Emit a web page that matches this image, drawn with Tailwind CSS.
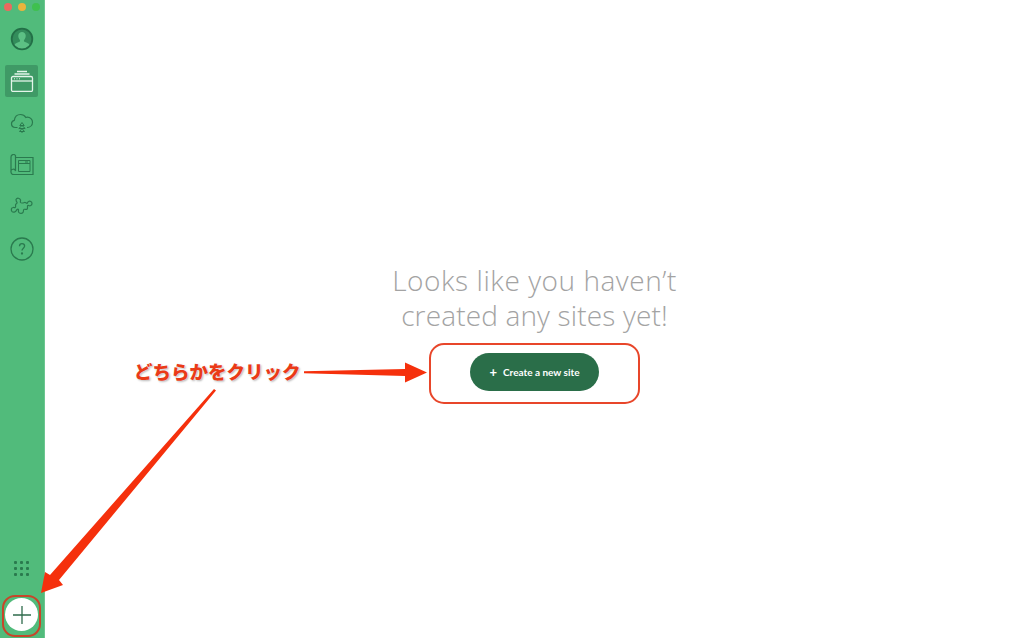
<!DOCTYPE html>
<html lang="ja">
<head>
<meta charset="utf-8">
<script src="https://cdn.jsdelivr.net/npm/@tailwindcss/browser@4"></script>
</head>
<body class="m-0 overflow-hidden bg-white">
<div class="relative flex h-[638px] w-[1024px] font-['Lato','Liberation_Sans',sans-serif]">
  <aside class="flex h-full w-[45px] shrink-0 flex-col items-center bg-[#51bb7b] border-r border-[#6cc690]">
    <div class="flex w-full gap-[6px] pl-[4px] pt-[3px]">
      <span class="h-[8px] w-[8px] rounded-full bg-[#ec6a5e]"></span>
      <span class="h-[8px] w-[8px] rounded-full bg-[#e9b43c]"></span>
      <span class="h-[8px] w-[8px] rounded-full bg-[#3fc04f]"></span>
    </div>
    <nav class="mt-[12px] mr-[1px] flex flex-col items-center gap-[10px]">
      <a class="flex h-[32px] w-[33px] items-center justify-center">
        <svg width="24" height="24" viewBox="0 0 24 24"><circle cx="12" cy="12" r="10.200" fill="#338c5b"/><path d="M3.800 18.500c1.200-2.500 4.300-2.900 5.800-3.800.7-.5.600-1.300.1-2-1-1.200-1.500-2.700-1.400-4.100.2-2.200 1.700-3.500 3.700-3.500s3.500 1.300 3.700 3.500c.1 1.400-.4 2.900-1.400 4.100-.5.700-.6 1.500.1 2 1.500.9 4.600 1.300 5.800 3.800-2 2.500-5 3.900-8.200 3.900s-6.200-1.400-8.200-3.900z" fill="#5cc084"/><circle cx="12" cy="12" r="10.300" fill="none" stroke="#236f47" stroke-width="1.800"/></svg>
      </a>
      <a class="flex h-[32px] w-[33px] items-center justify-center rounded-[2px] bg-[#3f9a66]">
        <svg width="24" height="22" viewBox="0 0 24 22" fill="none" stroke="#e4f5ea" stroke-width="1.300"><path d="M7 1.500h10M4.500 4h15"/><rect x="1.500" y="6.500" width="21" height="15" rx="1.500"/><path d="M1.500 11h21"/><path d="M4 8.800h1M6.500 8.800h1M9 8.800h1" stroke-width="1"/></svg>
      </a>
      <a class="flex h-[32px] w-[33px] items-center justify-center">
        <svg width="24" height="22" viewBox="0 0 24 22" fill="none" stroke="#2a7a4e" stroke-width="1.200"><path d="M7.500 15.500H5.500C3 15.500 1.500 13.800 1.500 11.800c0-1.800 1.200-3.100 2.800-3.500C4.800 5 7.300 2.500 10.500 2.500c2.400 0 4.300 1.200 5.300 3 .5-.2 1-.3 1.500-.3 2.900 0 5.200 2.200 5.200 5 0 2.900-2.200 5.300-5.500 5.300"/><path d="M12 10.500 9.800 13.500h4.400zM12 13.500 8.800 16.500h6.400zM12 16.500 9.500 19.500h5zM12 19.500v1.500" stroke-width="1"/></svg>
      </a>
      <a class="flex h-[32px] w-[33px] items-center justify-center">
        <svg width="24" height="22" viewBox="0 0 24 22" fill="none" stroke="#2a7a4e" stroke-width="1.200"><path d="M5.500 3.500h17.500v17H3.500A2.500 2.500 0 0 1 1 18V3a2.500 2.500 0 0 1 4.500-1.500V17A2.300 2.300 0 0 0 1 18"/><path d="M8.500 6.500h11.500v11H8.500zM8.500 9.500h11.500M15 8h3" stroke-width="1"/></svg>
      </a>
      <a class="flex h-[32px] w-[33px] items-center justify-center">
        <svg width="24" height="24" viewBox="0 0 24 24" fill="none" stroke="#2a7a4e" stroke-width="1.200"><path d="M6 4.500c1-2 4-1.500 4.500.5.300 1.200-.5 1.500 0 2.500.8 1 2.500.5 4 0 1-.3 1.500.8 2.500.8.800-.2.500-1.300 1.500-1.800 1.500-.8 3.500.3 3.500 2 0 1.800-2 2.800-3.300 2-.8-.4-1.200.1-1.200 1 0 1.200.3 2-.5 2.700-.9.600-1.800-.2-2.800.1-1 .4-.7 1.500-1 2.700-.5 1.800-3.500 2-4.500.3-.7-1.200.3-2.300-.5-3-.8-.5-1.500.5-2 1.500-.6 1.300-3 2-4.300.5-1.200-1.500-.5-3.500 1.200-3.800 1-.2 1.500.4 2.200-.1.800-.7 0-1.800.3-2.800.3-.9 1.300-1 1.500-1.800.1-.7-1-1.200-1-2.500z"/></svg>
      </a>
      <a class="flex h-[32px] w-[33px] items-center justify-center">
        <svg width="24" height="24" viewBox="0 0 24 24" fill="none" stroke="#2a7a4e" stroke-width="1.300"><circle cx="12" cy="12" r="11"/><path d="M9.500 9.300c0-1.600 1-2.600 2.500-2.600s2.600 1 2.600 2.400c0 2.100-2.600 2.100-2.600 4.500"/><circle cx="12" cy="16.500" r=".5" fill="#2a7a4e"/></svg>
      </a>
    </nav>
    <div class="mt-auto mb-[62px] mr-[1px] grid grid-cols-3 gap-[3px]">
      <span class="h-[3px] w-[3px] rounded-[1px] bg-[#2a7a4e]"></span><span class="h-[3px] w-[3px] rounded-[1px] bg-[#2a7a4e]"></span><span class="h-[3px] w-[3px] rounded-[1px] bg-[#2a7a4e]"></span>
      <span class="h-[3px] w-[3px] rounded-[1px] bg-[#2a7a4e]"></span><span class="h-[3px] w-[3px] rounded-[1px] bg-[#2a7a4e]"></span><span class="h-[3px] w-[3px] rounded-[1px] bg-[#2a7a4e]"></span>
      <span class="h-[3px] w-[3px] rounded-[1px] bg-[#2a7a4e]"></span><span class="h-[3px] w-[3px] rounded-[1px] bg-[#2a7a4e]"></span><span class="h-[3px] w-[3px] rounded-[1px] bg-[#2a7a4e]"></span>
    </div>
  </aside>
  <main class="flex flex-1 flex-col items-center pt-[263px]">
    <h1 class="text-center font-['Open_Sans',sans-serif] text-[28px] leading-[35px] font-[350] tracking-[0.55px] text-[#a3a3a3]">Looks like you haven’t<br><span class="tracking-[0.15px]">created any sites yet!</span></h1>
    <button class="mt-[20px] flex h-[38px] w-[129px] items-center justify-center gap-[6px] rounded-full bg-[#2a6e49] text-[10px] font-bold text-white">
      <span class="text-[13px] leading-none">+</span><span>Create a new site</span>
    </button>
  </main>

  <button class="absolute left-[5px] top-[598px] flex h-[33px] w-[33px] items-center justify-center rounded-full bg-white">
    <svg width="18" height="18" viewBox="0 0 18 18" stroke="#2f6b4c" stroke-width="1.300"><path d="M9 0v18M0 9h18"/></svg>
  </button>

  <div class="absolute left-[2px] top-[595px] h-[42px] w-[39px] rounded-[13px] border-2 border-[#c8452a]"></div>
  <div class="absolute left-[429px] top-[343px] h-[61px] w-[211px] rounded-[15px] border-2 border-[#e8462a]"></div>
  <span class="absolute left-[134px] top-[359px] text-[18.500px] leading-[24px] font-black whitespace-nowrap text-[#ea3a17] font-['Noto_Sans_CJK_JP',sans-serif] [text-shadow:0_0_2px_#fff,1px_1px_2px_#aaa]">どちらかをクリック</span>
  <svg class="absolute left-0 top-0" width="1024" height="638" viewBox="0 0 1024 638" fill="#f5300c">
    <path d="M304 371.200 L405 369 L405 362.500 L427 372.500 L405 382.500 L405 376 L304 373.200 Z"/>
    <path d="M214 389 L216 390.500 L59 580 L63 585 L41 593 L45 572 L50 575 Z"/>
  </svg>
</div>
</body>
</html>
